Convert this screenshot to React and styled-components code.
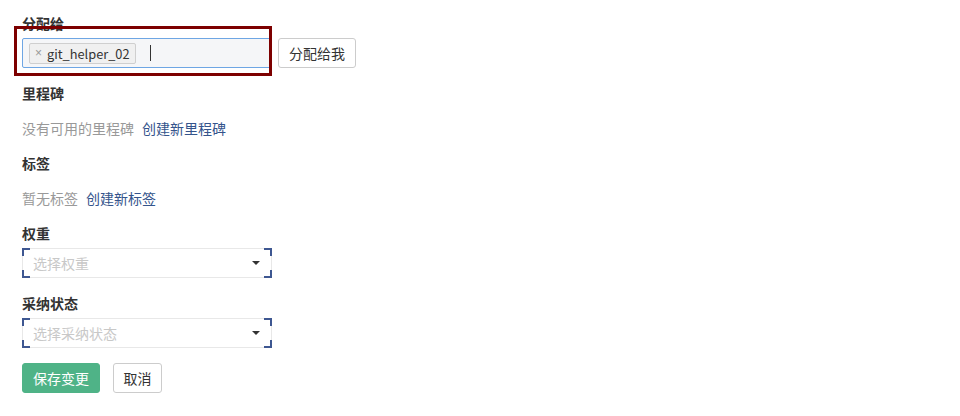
import React from "react";
import styled, { createGlobalStyle } from "styled-components";

const Global = createGlobalStyle`
  html, body { margin: 0; padding: 0; background: #fff; }
  body {
    font-family: "Noto Sans CJK SC", "Noto Sans", sans-serif;
    font-size: 14px;
    color: #333;
  }
`;

const Page = styled.div`
  position: relative;
  padding: 13px 22px 0;
  display: flex;
  flex-direction: column;
  gap: 15px;
`;

const Field = styled.div`
  display: flex;
  flex-direction: column;
  gap: ${(p) => (p.$text ? "15px" : "5px")};
`;

const Label = styled.div`
  font-weight: 700;
  font-size: 14px;
  line-height: 20px;
  height: 20px;
  color: #333;
`;

const Row = styled.div`
  display: flex;
  align-items: center;
  gap: 6px;
`;

const TagInput = styled.div`
  box-sizing: border-box;
  width: 250px;
  height: 30px;
  background: #f5f6f8;
  border: 1px solid #6ea6e4;
  border-radius: 2px;
  display: flex;
  align-items: center;
  padding: 0 6px;
  gap: 14px;
`;

const Tag = styled.span`
  box-sizing: border-box;
  height: 21px;
  display: inline-flex;
  align-items: center;
  background: #f0f0f0;
  border: 1px solid #cfcfcf;
  border-radius: 2px;
  padding: 0 5px 0 5px;
  font-size: 12.8px;
  color: #333;
  line-height: 19px;
`;

const TagX = styled.span`
  font-family: "Liberation Sans", sans-serif;
  color: #999;
  font-size: 12px;
  margin-right: 5px;
`;

const Caret = styled.span`
  width: 1px;
  height: 16px;
  background: #333;
`;

const Button = styled.button`
  box-sizing: border-box;
  height: 30px;
  padding: 0 ${(p) => p.$pad || 10}px;
  font-family: inherit;
  font-size: 14px;
  border-radius: 3px;
  cursor: pointer;
  border: 1px solid ${(p) => (p.$primary ? "#4fb387" : "#ccc")};
  background: ${(p) => (p.$primary ? "#4fb387" : "#fff")};
  color: ${(p) => (p.$primary ? "#fff" : "#333")};
`;

const Text = styled.div`
  font-size: 14px;
  line-height: 20px;
  height: 20px;
  color: #999;
  display: flex;
  gap: 8px;
`;

const Link = styled.a`
  color: #34548c;
  text-decoration: none;
`;

const Select = styled.div`
  position: relative;
  box-sizing: border-box;
  width: 250px;
  height: 30px;
  border: 1px solid #e8e8e8;
  display: flex;
  align-items: center;
  justify-content: space-between;
  padding: 0 11px 0 10px;
  color: #c8c8c8;
  font-size: 14px;
`;

const Corner = styled.span`
  position: absolute;
  width: 6px;
  height: 6px;
  border-color: #3e5791;
  border-style: solid;
  border-width: 0;
  ${(p) => (p.$top ? "top: -1px;" : "bottom: -1px;")}
  ${(p) => (p.$left ? "left: -1px;" : "right: -1px;")}
  ${(p) => (p.$top ? "border-top-width: 2px;" : "border-bottom-width: 2px;")}
  ${(p) => (p.$left ? "border-left-width: 2px;" : "border-right-width: 2px;")}
`;

const Arrow = styled.span`
  width: 0;
  height: 0;
  border-left: 4px solid transparent;
  border-right: 4px solid transparent;
  border-top: 4px solid #333;
`;

const Actions = styled.div`
  display: flex;
  gap: 13px;
`;

const Highlight = styled.div`
  position: absolute;
  left: 14px;
  top: 26px;
  width: 258px;
  height: 50px;
  box-sizing: border-box;
  border: 3px solid #7d0000;
  pointer-events: none;
`;

function SelectBox({ placeholder }) {
  return (
    <Select>
      <span>{placeholder}</span>
      <Arrow />
      <Corner $top $left />
      <Corner $top />
      <Corner $left />
      <Corner />
    </Select>
  );
}

export default function App() {
  return (
    <>
      <Global />
      <Page>
        <Field>
          <Label>分配给</Label>
          <Row>
            <TagInput>
              <Tag>
                <TagX>×</TagX>git_helper_02
              </Tag>
              <Caret />
            </TagInput>
            <Button>分配给我</Button>
          </Row>
        </Field>
        <Field $text>
          <Label>里程碑</Label>
          <Text>
            <span>没有可用的里程碑</span>
            <Link href="#">创建新里程碑</Link>
          </Text>
        </Field>
        <Field $text>
          <Label>标签</Label>
          <Text>
            <span>暂无标签</span>
            <Link href="#">创建新标签</Link>
          </Text>
        </Field>
        <Field>
          <Label>权重</Label>
          <SelectBox placeholder="选择权重" />
        </Field>
        <Field>
          <Label>采纳状态</Label>
          <SelectBox placeholder="选择采纳状态" />
        </Field>
        <Actions>
          <Button $primary>保存变更</Button>
          <Button $pad={9.5}>取消</Button>
        </Actions>
        <Highlight />
      </Page>
    </>
  );
}
